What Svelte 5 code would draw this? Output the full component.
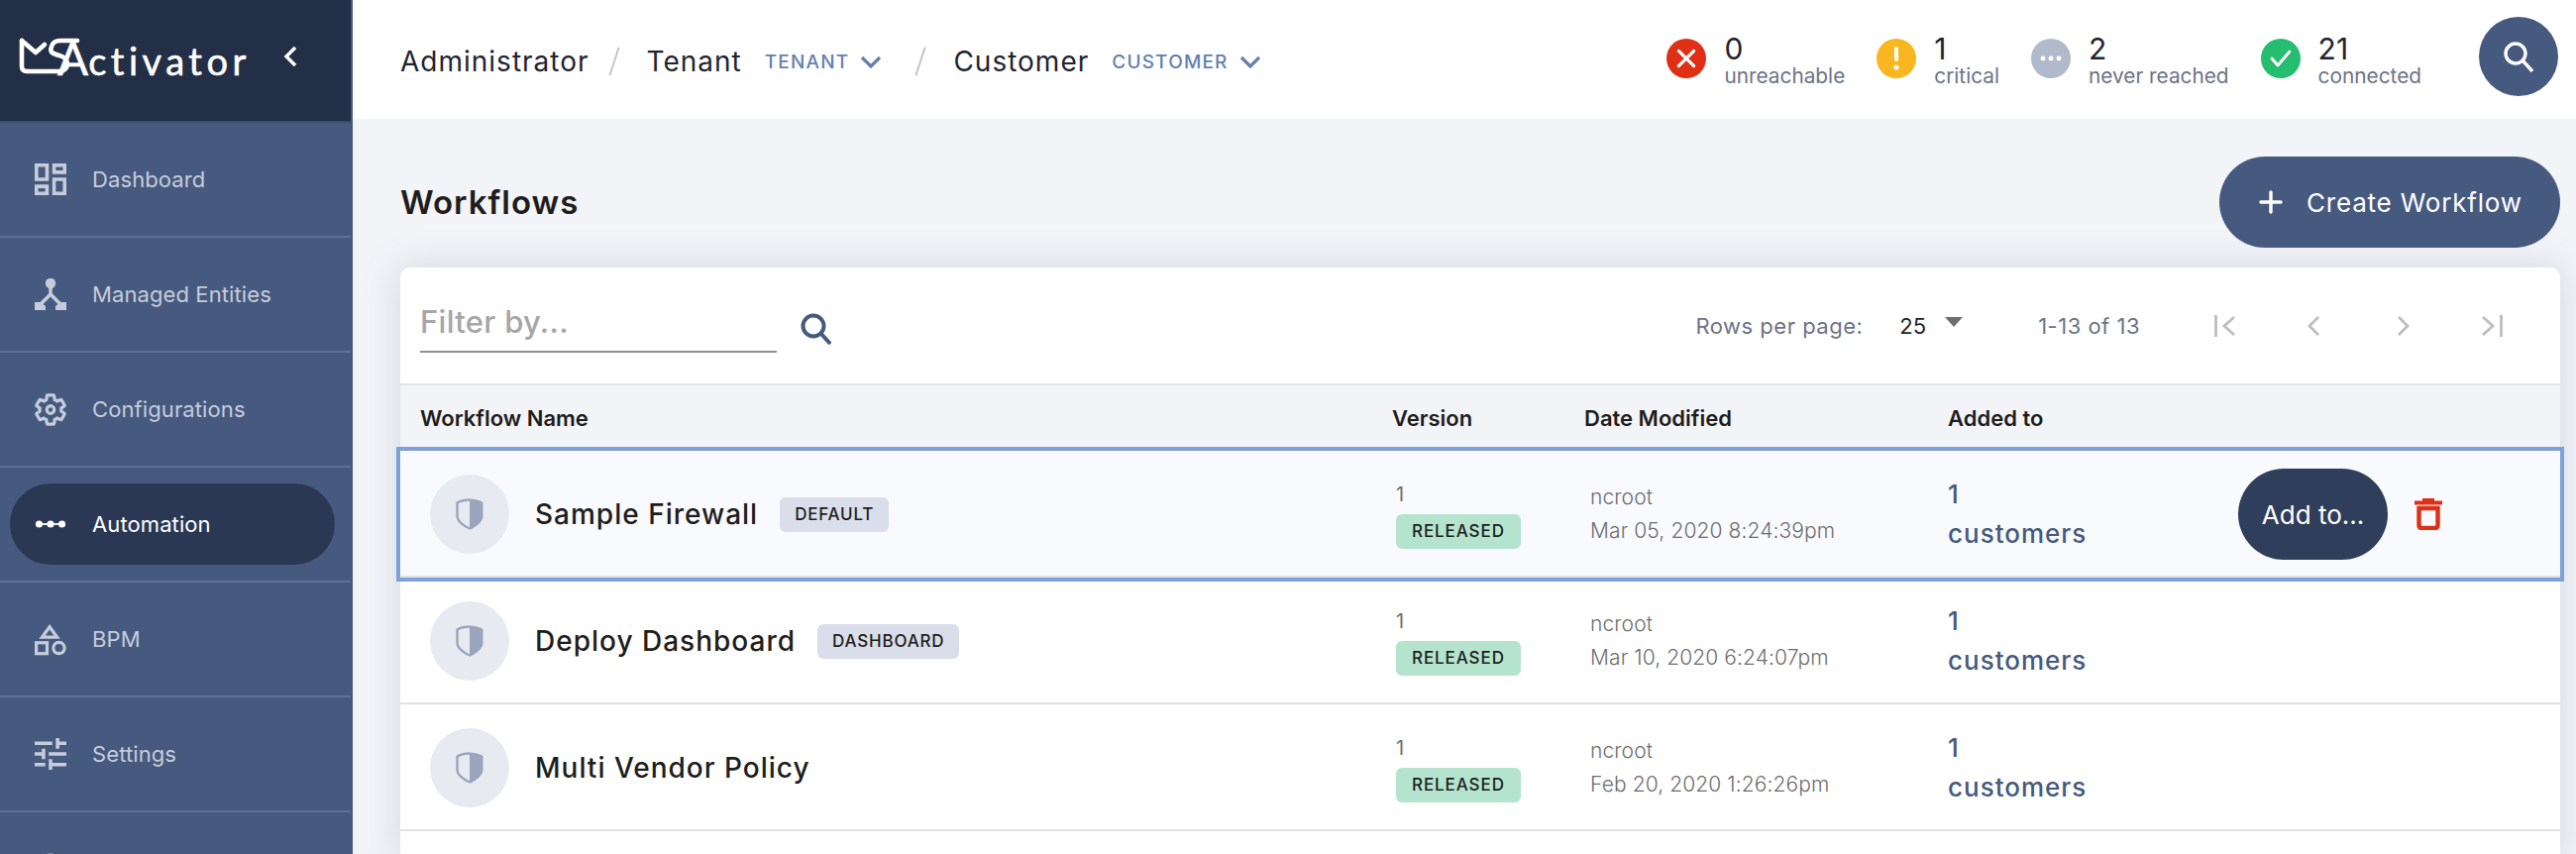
<script>
  const nav = [
    { label: "Dashboard", icon: "dashboard" },
    { label: "Managed Entities", icon: "entities" },
    { label: "Configurations", icon: "gear" },
    { label: "Automation", icon: "automation", active: true },
    { label: "BPM", icon: "bpm" },
    { label: "Settings", icon: "tune" },
    { label: "", icon: "user" }
  ];

  const statuses = [
    { n: 0, label: "unreachable", kind: "red" },
    { n: 1, label: "critical", kind: "amber" },
    { n: 2, label: "never reached", kind: "grey" },
    { n: 21, label: "connected", kind: "green" }
  ];

  const rows = [
    { name: "Sample Firewall", tag: "DEFAULT", date: "Mar 05, 2020 8:24:39pm", selected: true },
    { name: "Deploy Dashboard", tag: "DASHBOARD", date: "Mar 10, 2020 6:24:07pm" },
    { name: "Multi Vendor Policy", date: "Feb 20, 2020 1:26:26pm" }
  ];
</script>

<div class="shell">
  <aside class="sidebar">
    <div class="brand">
      <div class="logo">
        <svg class="logo-mark" viewBox="0 0 64 40" width="64" height="40" fill="none" stroke="#fff" stroke-width="4.6" stroke-linecap="round" stroke-linejoin="round">
          <path d="M4 4 V30 Q4 35 9 35 H42 C52 35 53 22 42 19 C34 17 32 15 34 10 C35 6 38 4 43 4 H60" />
          <path d="M4 4 L18 16 L27 8" />
        </svg>
        <span class="logo-word"><span class="logo-a">A</span>ctivator</span>
      </div>
      <svg class="collapse" viewBox="0 0 14 22" width="14" height="22" fill="none" stroke="#fff" stroke-width="3.4">
        <path d="M12 2 L3 11 L12 20" />
      </svg>
    </div>

    <nav>
      {#each nav as item}
        <div class="nav-item">
          <div class="nav-link" class:active={item.active}>
            <span class="nav-icon">
              {#if item.icon === "dashboard"}
                <svg viewBox="3 3 18 18" width="32" height="32" fill="currentColor"><path d="M19 5v2h-4V5h4M9 5v6H5V5h4m10 8v6h-4v-6h4M9 17v2H5v-2h4M21 3h-8v6h8V3zM11 3H3v10h8V3zm10 8h-8v10h8V11zm-10 4H3v6h8v-6z" /></svg>
              {:else if item.icon === "entities"}
                <svg viewBox="0 0 32 32" width="32" height="32" fill="currentColor">
                  <circle cx="16" cy="5" r="5.2" />
                  <path d="M16 9 V16 L6 26 M16 16 L26 26" fill="none" stroke="currentColor" stroke-width="3.6" />
                  <path d="M0 24 H6 L11 28 V32 H0 Z M32 24 H26 L21 28 V32 H32 Z" />
                </svg>
              {:else if item.icon === "gear"}
                <svg viewBox="1 1 22 22" width="35" height="35" fill="none" stroke="currentColor" stroke-width="2.2"><path d="M19.43 12.98c.04-.32.07-.64.07-.98 0-.34-.03-.66-.07-.98l2.11-1.65c.19-.15.24-.42.12-.64l-2-3.46c-.12-.22-.39-.3-.61-.22l-2.49 1c-.52-.4-1.08-.73-1.69-.98l-.38-2.65C14.46 2.18 14.25 2 14 2h-4c-.25 0-.46.18-.49.42l-.38 2.65c-.61.25-1.17.59-1.69.98l-2.49-1c-.23-.09-.49 0-.61.22l-2 3.46c-.13.22-.07.49.12.64l2.11 1.65c-.04.32-.07.65-.07.98 0 .33.03.66.07.98l-2.11 1.65c-.19.15-.24.42-.12.64l2 3.46c.12.22.39.3.61.22l2.49-1c.52.4 1.08.73 1.69.98l.38 2.65c.03.24.24.42.49.42h4c.25 0 .46-.18.49-.42l.38-2.65c.61-.25 1.17-.59 1.69-.98l2.49 1c.23.09.49 0 .61-.22l2-3.46c.12-.22.07-.49-.12-.64l-2.11-1.65z" /><circle cx="12" cy="12" r="2.6" /></svg>
              {:else if item.icon === "automation"}
                <svg viewBox="0 0 36 12" width="36" height="12" fill="currentColor">
                  <path d="M4 6 H32" stroke="currentColor" stroke-width="2" />
                  <circle cx="5" cy="6" r="4" /><circle cx="18" cy="6" r="4" /><circle cx="31" cy="6" r="4" />
                </svg>
              {:else if item.icon === "bpm"}
                <svg viewBox="0 0 34 34" width="34" height="34" fill="none" stroke="currentColor" stroke-width="3.4">
                  <path d="M16 4 L24 15 H8 Z" />
                  <rect x="1.7" y="21" width="11.6" height="11.6" />
                  <circle cx="26" cy="26.6" r="6" />
                </svg>
              {:else if item.icon === "tune"}
                <svg viewBox="3 3 18 18" width="32" height="32" fill="currentColor"><path d="M3 17v2h6v-2H3zM3 5v2h10V5H3zm10 16v-2h8v-2h-8v-2h-2v6h2zM7 9v2H3v2h4v2h2V9H7zm14 4v-2H11v2h10zm-6-4h2V7h4V5h-4V3h-2v6z" /></svg>
              {:else}
                <svg viewBox="0 0 32 32" width="32" height="32" fill="none" stroke="currentColor" stroke-width="3"><circle cx="16" cy="16" r="14" /></svg>
              {/if}
            </span>
            <span class="nav-label">{item.label}</span>
          </div>
        </div>
      {/each}
    </nav>
  </aside>

  <div class="content">
    <header class="topbar">
      <div class="crumbs">
        <span class="crumb">Administrator</span>
        <i class="slash"></i>
        <span class="crumb">Tenant</span>
        <span class="picker">TENANT
          <svg viewBox="0 0 22 13" width="22" height="13" fill="none" stroke="currentColor" stroke-width="3.2"><path d="M2 2 L11 11 L20 2" /></svg>
        </span>
        <i class="slash"></i>
        <span class="crumb">Customer</span>
        <span class="picker">CUSTOMER
          <svg viewBox="0 0 22 13" width="22" height="13" fill="none" stroke="currentColor" stroke-width="3.2"><path d="M2 2 L11 11 L20 2" /></svg>
        </span>
      </div>

      <div class="statuses">
        {#each statuses as s}
          <div class="status">
            <span class="dot {s.kind}">
              {#if s.kind === "red"}
                <svg viewBox="0 0 20 20" width="22" height="22" fill="none" stroke="#fff" stroke-width="2.8" stroke-linecap="round"><path d="M3 3 L17 17 M17 3 L3 17" /></svg>
              {:else if s.kind === "amber"}
                <svg viewBox="0 0 6 24" width="6" height="24" fill="#fff"><rect x="1" y="0" width="4" height="15" rx="2" /><circle cx="3" cy="21" r="2.5" /></svg>
              {:else if s.kind === "grey"}
                <svg viewBox="0 0 22 6" width="22" height="6" fill="#fff"><circle cx="3" cy="3" r="2.4" /><circle cx="11" cy="3" r="2.4" /><circle cx="19" cy="3" r="2.4" /></svg>
              {:else}
                <svg viewBox="0 0 22 18" width="22" height="18" fill="none" stroke="#fff" stroke-width="2.8" stroke-linecap="round" stroke-linejoin="round"><path d="M2 9 L8 16 L20 2" /></svg>
              {/if}
            </span>
            <div class="status-text">
              <span class="count">{s.n}</span>
              <span class="status-label">{s.label}</span>
            </div>
          </div>
        {/each}
      </div>

      <button class="round-search" aria-label="Search">
        <svg viewBox="0 0 32 32" width="32" height="32" fill="none" stroke="#fff" stroke-width="3.4"><circle cx="13" cy="13" r="10" /><path d="M20 20 L30 31" /></svg>
      </button>
    </header>

    <main>
      <div class="page-head">
        <h1>Workflows</h1>
        <button class="create">
          <svg viewBox="0 0 24 24" width="24" height="24" fill="none" stroke="#fff" stroke-width="3.4" stroke-linecap="round"><path d="M12 2 V22 M2 12 H22" /></svg>
          Create Workflow
        </button>
      </div>

      <section class="card">
        <div class="toolbar">
          <div class="filter">Filter by...</div>
          <svg class="filter-icon" viewBox="0 0 32 32" width="32" height="32" fill="none" stroke="#465a80" stroke-width="4"><circle cx="13" cy="13" r="10.5" /><path d="M20 20 L30 31" /></svg>
          <div class="pager">
            <span class="rows-label">Rows per page:</span>
            <span class="rows-value">25</span>
            <i class="caret"></i>
            <span class="range">1-13 of 13</span>
            <svg class="p1" viewBox="0 0 22 22" width="22" height="22" fill="none" stroke="#bdbdbd" stroke-width="2.8"><path d="M1.5 0 V22 M20 2 L10 11 L20 20" /></svg>
            <svg class="p2" viewBox="0 0 14 22" width="14" height="22" fill="none" stroke="#bdbdbd" stroke-width="2.8"><path d="M12 2 L3 11 L12 20" /></svg>
            <svg class="p3" viewBox="0 0 14 22" width="14" height="22" fill="none" stroke="#bdbdbd" stroke-width="2.8"><path d="M2 2 L11 11 L2 20" /></svg>
            <svg class="p4" viewBox="0 0 22 22" width="22" height="22" fill="none" stroke="#bdbdbd" stroke-width="2.8"><path d="M20.5 0 V22 M2 2 L12 11 L2 20" /></svg>
          </div>
        </div>

        <div class="grid head">
          <span class="first">Workflow Name</span>
          <span>Version</span>
          <span>Date Modified</span>
          <span>Added to</span>
        </div>

        {#each rows as row}
          <div class="grid row" class:selected={row.selected}>
            <div class="name-cell">
              <span class="avatar">
                <svg viewBox="0 0 28 32" width="28" height="32">
                  <path d="M14 1.5 C9 1.5 5 2.5 1.5 4.5 V18 C1.5 23 8 28 14 30.5" fill="none" stroke="#9aa5bd" stroke-width="2.4" />
                  <path d="M14 0.5 C19 0.5 24 2 27.5 4 V18 C27.5 24 20 29 14 32 Z" fill="#9aa5bd" />
                </svg>
              </span>
              <span class="wf-name">{row.name}</span>
              {#if row.tag}<span class="tag">{row.tag}</span>{/if}
            </div>
            <div class="version">
              <span>1</span>
              <span class="released">RELEASED</span>
            </div>
            <div class="modified">
              <span>ncroot</span>
              <span>{row.date}</span>
            </div>
            <div class="added">
              <span>1</span>
              <span>customers</span>
            </div>
            <div class="actions">
              {#if row.selected}
                <button class="add-to">Add to...</button>
                <svg viewBox="0 0 28 32" width="28" height="32" fill="#df3015" aria-label="Delete">
                  <rect x="8" y="0" width="12" height="3" />
                  <rect x="0" y="2.5" width="28" height="4" />
                  <path d="M4.5 10 H23.5 V27 Q23.5 30 20.5 30 H7.5 Q4.5 30 4.5 27 Z" fill="none" stroke="#df3015" stroke-width="4.4" />
                </svg>
              {/if}
            </div>
          </div>
        {/each}
      </section>
    </main>
  </div>
</div>

<style>
  :global(body) {
    margin: 0;
    background: #f3f4f8;
    font-family: Inter, "Open Sans", sans-serif;
    color: #1e1e20;
  }

  .shell {
    display: flex;
    height: 862px;
    overflow: hidden;
  }

  /* sidebar */
  .sidebar {
    width: 356px;
    flex: none;
    box-sizing: border-box;
    padding-right: 2px;
    background: #465a80;
    overflow: hidden;
  }

  .brand {
    height: 124px;
    box-sizing: border-box;
    border-bottom: 2px solid #3d4e71;
    background: #232e47;
    display: flex;
    align-items: center;
    padding: 0 0 8px 18px;
  }

  .logo {
    display: flex;
    align-items: flex-end;
    height: 40px;
    color: #fff;
  }

  .logo-mark {
    flex: none;
  }

  .logo-word {
    font-family: Lato, sans-serif;
    font-size: 38px;
    line-height: 36px;
    letter-spacing: 4.5px;
    margin: 0 0 -2px -24px;
    -webkit-text-stroke: 0.6px #fff;
  }

  .logo-a {
    font-size: 46px;
    letter-spacing: 0;
  }

  .collapse {
    margin-left: 33px;
  }

  .nav-item {
    height: 116px;
    box-sizing: border-box;
    padding: 16px 16px 16px 10px;
    border-bottom: 2px solid #5d6f93;
  }

  .nav-link {
    height: 82px;
    display: flex;
    align-items: center;
    padding-left: 25px;
    border-radius: 41px;
    color: #c6ccda;
    font-size: 22px;
  }

  .nav-link.active {
    background: #2b3853;
    color: #fff;
  }

  .nav-icon {
    width: 32px;
    height: 36px;
    display: flex;
    align-items: center;
    justify-content: center;
    margin-right: 26px;
  }

  .nav-label {
    letter-spacing: 0.1px;
  }

  /* top bar */
  .content {
    flex: 1;
    min-width: 0;
  }

  .topbar {
    height: 120px;
    background: #fff;
    display: flex;
    align-items: center;
    padding: 0 18px 0 48px;
    box-sizing: border-box;
  }

  .crumbs {
    display: flex;
    align-items: center;
    flex: 1;
    margin-top: 4px;
  }

  .crumb {
    font-size: 28px;
    letter-spacing: 1px;
    color: #1f2430;
  }

  .slash {
    width: 2px;
    height: 30px;
    background: #c4c4c4;
    transform: rotate(18deg);
    margin: 0 32px 0 24px;
  }

  .picker {
    display: flex;
    align-items: center;
    gap: 11px;
    margin: 0 14px 0 23px;
    font-size: 19px;
    font-weight: 500;
    letter-spacing: 1.2px;
    color: #6480b0;
  }

  .statuses {
    display: flex;
  }

  .status {
    display: flex;
    align-items: center;
    gap: 18px;
    margin-right: 32px;
  }

  .dot {
    width: 40px;
    height: 40px;
    border-radius: 50%;
    display: flex;
    align-items: center;
    justify-content: center;
    margin-bottom: 2px;
  }

  .dot.red { background: #df3015; }
  .dot.amber { background: #f8b720; }
  .dot.grey { background: #b1bacb; }
  .dot.green { background: #25bd70; }

  .status-text {
    display: flex;
    flex-direction: column;
    padding-top: 2px;
  }

  .count {
    font-size: 30px;
    line-height: 32px;
    color: #1f2430;
  }

  .status-label {
    font-size: 20.8px;
    line-height: 24px;
    color: #6d7386;
  }

  .round-search {
    width: 80px;
    height: 80px;
    margin: 0 0 6px 26px;
    border: 0;
    border-radius: 50%;
    background: #465a80;
    display: flex;
    align-items: center;
    justify-content: center;
  }

  /* main */
  main {
    padding: 38px 16px 0 48px;
  }

  .page-head {
    display: flex;
    align-items: center;
    justify-content: space-between;
    height: 92px;
    margin-bottom: 20px;
  }

  h1 {
    margin: 0;
    font-size: 33px;
    font-weight: 600;
    letter-spacing: 1px;
  }

  .create {
    width: 344px;
    height: 92px;
    border: 0;
    border-radius: 46px;
    background: #465a80;
    color: #fff;
    font: inherit;
    font-size: 26px;
    letter-spacing: 0.8px;
    display: flex;
    align-items: center;
    gap: 24px;
    padding: 0 0 0 40px;
    box-sizing: border-box;
  }

  .card {
    background: #fff;
    border-radius: 10px 10px 0 0;
    box-shadow: 0 0 36px rgba(120, 135, 170, 0.28);
    height: 600px;
  }

  .toolbar {
    height: 119px;
    box-sizing: border-box;
    border-bottom: 2px solid #e2e4e8;
    display: flex;
    align-items: center;
    padding-left: 20px;
  }

  .filter {
    width: 360px;
    height: 56px;
    box-sizing: border-box;
    margin-top: -2px;
    border-bottom: 2px solid #8f8f8f;
    font-size: 31px;
    font-weight: 500;
    letter-spacing: 0.3px;
    line-height: 50px;
    color: #a6a6a6;
  }

  .filter-icon {
    margin: 6px 0 0 24px;
  }

  .pager {
    margin-left: auto;
    display: flex;
    align-items: center;
    font-size: 22px;
    letter-spacing: 0.5px;
    color: #6d7386;
    padding-right: 58px;
  }

  .rows-value {
    margin-left: 37px;
    color: #1f2430;
    letter-spacing: 0;
  }

  .caret {
    width: 0;
    height: 0;
    margin: -8px 0 0 19px;
    border-left: 9px solid transparent;
    border-right: 9px solid transparent;
    border-top: 10px solid #6f6f6f;
  }

  .range {
    margin: 0 75px 0 76px;
  }

  .p2 { margin-left: 71px; }
  .p3 { margin-left: 77px; }
  .p4 { margin-left: 71px; }

  .grid {
    display: grid;
    grid-template-columns: 1001px 194px 367px 293px 1fr;
    align-items: center;
  }

  .head {
    height: 66px;
    background: #f3f4f8;
    font-size: 22px;
    font-weight: 600;
    box-sizing: border-box;
  }

  .head .first {
    padding-left: 20px;
  }

  .row {
    height: 128px;
    box-sizing: border-box;
    padding-top: 2px;
    border-bottom: 2px solid #e2e2e2;
    position: relative;
  }

  .row.selected {
    background: #f9fafe;
    outline: 4px solid #7fa0d8;
  }

  .name-cell {
    display: flex;
    align-items: center;
    padding-left: 30px;
  }

  .avatar {
    width: 80px;
    height: 80px;
    border-radius: 50%;
    background: #e7eaf0;
    display: flex;
    align-items: center;
    justify-content: center;
    margin-right: 26px;
  }

  .wf-name {
    font-size: 28px;
    font-weight: 500;
    letter-spacing: 1px;
  }

  .tag {
    margin-left: 22px;
    height: 35px;
    line-height: 35px;
    padding: 0 15px;
    border-radius: 6px;
    background: #d9deea;
    font-size: 17px;
    font-weight: 500;
    letter-spacing: 0.8px;
  }

  .version {
    display: flex;
    flex-direction: column;
    align-items: flex-start;
    padding-left: 4px;
    font-size: 20px;
    color: #6e6e6e;
    line-height: 31px;
  }

  .released {
    margin-top: 4px;
    height: 35px;
    line-height: 35px;
    padding: 0 16px;
    border-radius: 6px;
    background: #b5e4ce;
    color: #1e1e20;
    font-size: 17px;
    font-weight: 500;
    letter-spacing: 0.9px;
  }

  .modified {
    display: flex;
    flex-direction: column;
    padding-left: 6px;
    font-size: 21px;
    line-height: 34px;
    letter-spacing: 0.1px;
    color: #6e6e6e;
    font-weight: 300;
  }

  .added {
    display: flex;
    flex-direction: column;
    font-size: 26px;
    line-height: 40px;
    letter-spacing: 1px;
    font-weight: 500;
    color: #465a80;
  }

  .actions {
    display: flex;
    align-items: center;
    gap: 27px;
  }

  .add-to {
    width: 151px;
    height: 92px;
    border: 0;
    border-radius: 46px;
    background: #2f3e5a;
    color: #fff;
    font: inherit;
    font-size: 26px;
  }
</style>
